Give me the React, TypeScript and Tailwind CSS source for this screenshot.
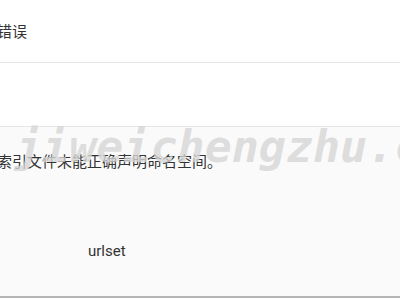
export default function App() {
  return (
    <div
      className="relative w-[400px] h-[300px] overflow-hidden bg-white text-[#333]"
      style={{ fontFamily: '"Noto Sans CJK SC", Roboto, sans-serif' }}
    >
      <div className="h-[63px] flex items-center -ml-[3px] text-[15px] border-b border-[#e6e6e6]">
        错误
      </div>
      <div className="h-[64px] border-b border-[#e6e6e6]" />
      <div className="h-[171px] bg-[#fafafa] border-b-2 border-[#b4b4b4]">
        <div className="pt-[24px] -ml-[3px] text-[15px] leading-[20px]">索引文件未能正确声明命名空间。</div>
        <div className="pt-[70px] pl-[88px] text-[15px] leading-[20px] font-['Roboto']">urlset</div>
      </div>
      <div
        className="absolute left-[15px] top-[113px] text-[45px] italic font-semibold text-[#d6d6d6]/80 whitespace-nowrap pointer-events-none"
        style={{ fontFamily: '"DejaVu Sans Mono", monospace' }}
      >
        jiweichengzhu.com
      </div>
    </div>
  );
}
